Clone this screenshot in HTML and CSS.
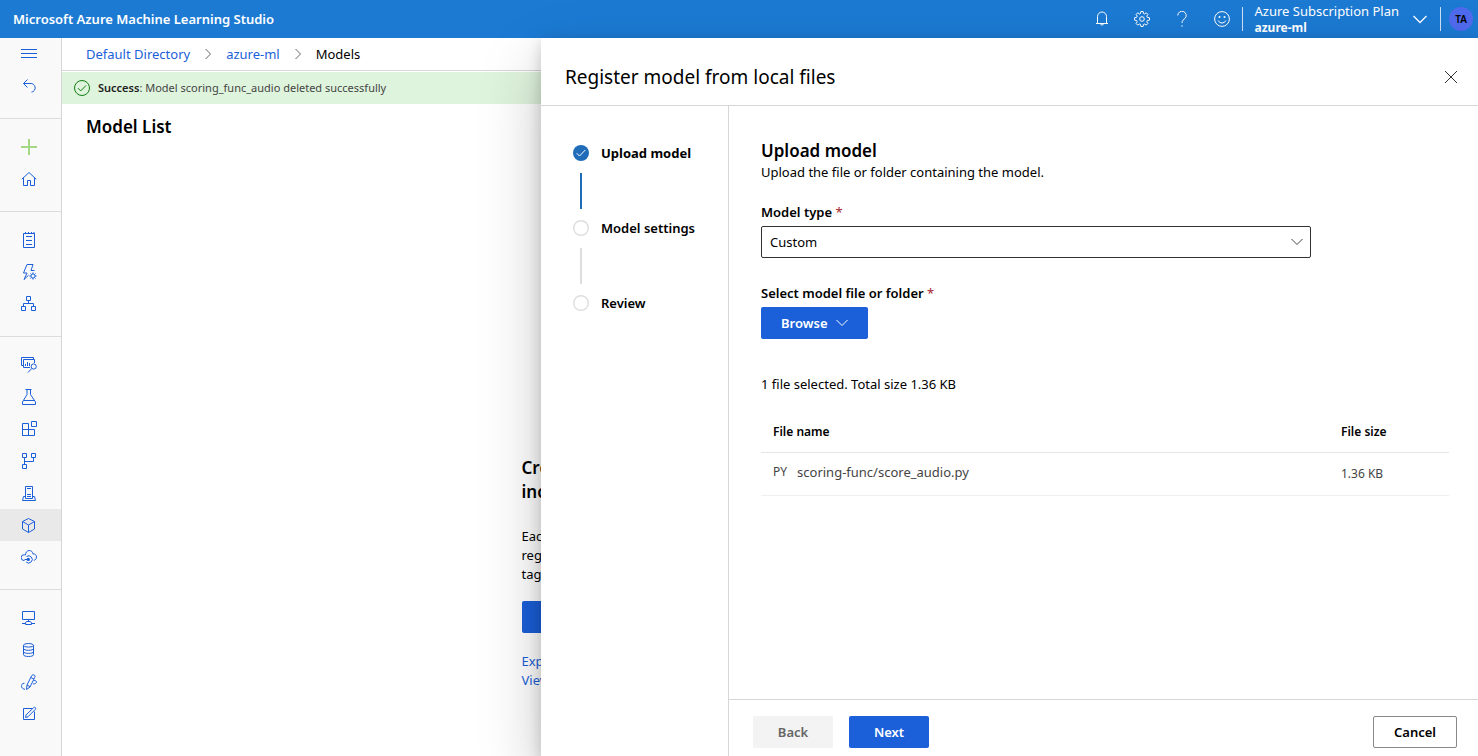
FILE: index.html
```html
<!DOCTYPE html>
<html lang="en">
<head>
<meta charset="utf-8">
<title>Microsoft Azure Machine Learning Studio</title>
<link rel="stylesheet" href="styles.css">
</head>
<body>
<div class="app">
  <header class="topbar">
    <span class="brand">Microsoft Azure Machine Learning Studio</span>
    <div class="topbar-tools">
      <button class="tool" aria-label="Notifications"><svg class="icon" viewBox="0 0 16 16"><path d="M2 12.500h12M3.500 12.500V5.500a4.500 4.500 0 0 1 9 0v7M6.500 13a1.600 1.600 0 0 0 3 0"/></svg></button>
      <button class="tool" aria-label="Settings"><svg class="icon" viewBox="0 0 16 16"><path d="M6.900.5h2.200l.4 2 1.100.5 1.700-1.200 1.600 1.600L12.800 5.100l.5 1.200 2.200.5v2.300l-2.200.5-.5 1.200 1.100 1.700-1.600 1.600-1.700-1.100-1.100.4-.4 2.100H6.900l-.4-2.100-1.100-.4-1.700 1.100-1.600-1.600 1.100-1.700-.5-1.200-2.200-.5V6.800l2.200-.5.5-1.200L2.100 3.400l1.600-1.600L5.400 3l1.100-.5z"/><circle cx="8" cy="8" r="2.300"/></svg></button>
      <button class="tool" aria-label="Help"><svg class="icon" viewBox="0 0 16 16"><path d="M3.800 4.500a4.200 4.200 0 1 1 7.400 2.700C9.600 8.800 8 9.300 8 12M8 14.200v1.500"/></svg></button>
      <button class="tool" aria-label="Feedback"><svg class="icon" viewBox="0 0 16 16"><circle cx="8" cy="8" r="7.400"/><path d="M4.200 9.500a4.100 4.100 0 0 0 7.600 0"/><circle class="dot" cx="5.500" cy="6" r="1"/><circle class="dot" cx="10.500" cy="6" r="1"/></svg></button>
      <button class="subscription">
        <span class="subscription-text"><span class="plan">Azure Subscription Plan</span><span class="workspace">azure-ml</span></span>
        <svg class="icon" viewBox="0 0 16 16"><path d="M1.500 5L8 11.500 14.500 5"/></svg>
      </button>
      <button class="account" aria-label="Account"><span class="avatar">TA</span></button>
    </div>
  </header>

  <div class="body">
    <nav class="sidebar" aria-label="Workspace">
      <div class="group">
        <a class="nav" href="#" aria-label="Menu"><svg class="icon" viewBox="0 0 16 16"><path d="M0 3.500h16M0 7.500h16M0 11.500h16"/></svg></a>
        <a class="nav" href="#" aria-label="Back"><svg class="icon" viewBox="0 0 16 16"><path d="M6.500 1.500L2.500 5.500l4 4M2.500 5.500H9a4.300 4.300 0 0 1 1.500 8.700"/></svg></a>
      </div>
      <div class="group">
        <a class="nav add" href="#" aria-label="New"><svg class="icon" viewBox="0 0 16 16"><path d="M0 8h16M8 0v16"/></svg></a>
        <a class="nav" href="#" aria-label="Home"><svg class="icon" viewBox="0 0 16 16"><path d="M.8 8.200L8 1.500l7.200 6.700M2.500 7v7.500h4v-5h3v5h4V7"/></svg></a>
      </div>
      <div class="group">
        <a class="nav" href="#" aria-label="Notebooks"><svg class="icon" viewBox="0 0 16 16"><path d="M2.500 1.500h11v14h-11zM4.500 0v2M7.500 0v2M10.500 0v2M13 0v2M5 4.500h6M5 8.500h6M5 12.500h6"/></svg></a>
        <a class="nav" href="#" aria-label="Automated ML"><svg class="icon" viewBox="0 0 16 16"><path d="M13.500 6.500H10L12 .5H6L2.500 9H6l-3 6.500 4.500-4.200"/><circle cx="12" cy="12" r="2.100"/><path d="M12 8.400v1.500M12 14.100v1.500M8.400 12h1.500M14.100 12h1.500M9.500 9.500l1 1M13.500 13.500l1 1M9.500 14.500l1-1M13.500 10.500l1-1"/></svg></a>
        <a class="nav" href="#" aria-label="Designer"><svg class="icon" viewBox="0 0 16 16"><path d="M5.500.5h4v4h-4zM.5 10.500h4v4h-4zM10.500 10.500h4v4h-4zM7.500 4.500v3M2.500 10.500v-3h10v3"/></svg></a>
      </div>
      <div class="group">
        <a class="nav" href="#" aria-label="Data"><svg class="icon" viewBox="0 0 16 16"><path d="M2.500 8.500h-2v-8h12v2M9 10.500H2.500v-8h11v3.500M4.500 9v-2M6.500 9v-4M8.500 9v-3"/><circle cx="12.700" cy="9.500" r="2.600"/><path d="M10.800 11.400L7 15.500"/></svg></a>
        <a class="nav" href="#" aria-label="Jobs"><svg class="icon" viewBox="0 0 16 16"><path d="M4.500.5h6M6 .5V5.500L1.500 13v2.500h13V13L9.500 5.500V.5M3 11.500h10"/></svg></a>
        <a class="nav" href="#" aria-label="Components"><svg class="icon" viewBox="0 0 16 16"><path d="M10.500.5h5v5h-5zM1.500 2.500h6v12h-6zM1.500 8.500h12v6h-12"/></svg></a>
        <a class="nav" href="#" aria-label="Pipelines"><svg class="icon" viewBox="0 0 16 16"><path d="M1.500.5h4v4h-4zM10.500.5h4v4h-4zM1.500 11.500h4v4h-4zM3.500 4.500v7M3.500 8.500h9v-4"/></svg></a>
        <a class="nav" href="#" aria-label="Environments"><svg class="icon" viewBox="0 0 16 16"><path d="M4.500 1.500h7v12h-7zM6 3.500h4M6 9.500h4M6 11.500h4M4.500 11.500H2.500l-1 4h13l-1-4h-2"/></svg></a>
        <a class="nav current" href="#" aria-label="Models" aria-current="page"><svg class="icon" viewBox="0 0 16 16"><path d="M7.500 1.500l6 3v7.500l-6 3.500-6-3.500V4.500zM1.500 4.500l6 3.500 6-3.500M7.500 8v7.500"/></svg></a>
        <a class="nav" href="#" aria-label="Endpoints"><svg class="icon" viewBox="0 0 16 16"><path d="M3.500 11.500H3A2.800 2.800 0 0 1 3 5.800C4 5.800 4 5.800 4.500 6 4.500 3.500 6 1.500 8.200 1.500c2.300 0 3.500 1.500 3.700 3.400 2.200-.2 3.600 1.100 3.600 3.200 0 1.600-1.100 3-2.700 3.200"/><path d="M5.500 7.500a3.600 3.600 0 1 1-.3 5.600M3.500 10.500h4"/><circle class="dot" cx="7.300" cy="10.400" r="1.700"/></svg></a>
      </div>
      <div class="group">
        <a class="nav" href="#" aria-label="Compute"><svg class="icon" viewBox="0 0 16 16"><path d="M1.500 1.500h12v8h-12zM7.500 9.500v2M1 13.500h3.500M10.500 13.500H14M4.500 12.500l1.500-1h3l1.500 1v2h-6z"/></svg></a>
        <a class="nav" href="#" aria-label="Datastores"><svg class="icon" viewBox="0 0 16 16"><ellipse cx="7.500" cy="3.300" rx="5" ry="1.800"/><path d="M2.500 3.300v9.400c0 2.400 10 2.400 10 0V3.300M2.500 6.500c0 2.400 10 2.400 10 0M2.500 9.600c0 2.400 10 2.400 10 0"/></svg></a>
        <a class="nav" href="#" aria-label="Data labeling"><svg class="icon" viewBox="0 0 16 16"><path d="M5.500 15.500l.5-4.500L10.500 2C11.500 0 15 .5 13.700 3.500L9 13zM9.800 3.500l3.200 1.700M6 11l3 1.700M4 15.300C-.8 14.800-.3 9 3.500 9.200M12.800 6.500c3.700-.3 3.700 3.500-.8 3.500"/></svg></a>
        <a class="nav" href="#" aria-label="Linked services"><svg class="icon" viewBox="0 0 16 16"><path d="M11.500 2.500h-9v11h11v-8M4.500 11.500l.6-2.600L12.700 1.600c1.200-1 2.700.5 1.700 1.700L7 10.800z"/></svg></a>
      </div>
    </nav>

    <main class="main">
      <nav class="crumbs" aria-label="Breadcrumb">
        <a href="#">Default Directory</a>
        <svg class="chevron" viewBox="0 0 8 12"><path d="M1.500 1L6.500 6l-5 5"/></svg>
        <a href="#">azure-ml</a>
        <svg class="chevron" viewBox="0 0 8 12"><path d="M1.500 1L6.500 6l-5 5"/></svg>
        <span>Models</span>
      </nav>
      <div class="banner" role="status">
        <svg class="icon" viewBox="0 0 16 16"><circle cx="8" cy="8" r="7.500"/><path d="M4 8.200l2.700 2.700L12 5.500"/></svg>
        <span><b>Success</b>: Model scoring_func_audio deleted successfully</span>
      </div>
      <h1 class="page-title">Model List</h1>
      <section class="empty">
        <h2>Create models to track and version,<br>including your own model files</h2>
        <p>Each registered model keeps its files together,<br>registered under one name and version, with<br>tags and properties.</p>
        <button class="btn primary">Register model</button>
        <div class="links"><a href="#">Explore tutorials</a><a href="#">View documentation</a></div>
      </section>
    </main>
  </div>

  <section class="panel" role="dialog" aria-labelledby="panel-title">
    <header class="panel-head">
      <h2 id="panel-title">Register model from local files</h2>
      <button class="close" aria-label="Close"><svg class="icon" viewBox="0 0 16 16"><path d="M2 2l12 12M14 2L2 14"/></svg></button>
    </header>
    <div class="panel-body">
      <ol class="steps">
        <li class="step active"><svg class="marker" viewBox="0 0 16 16"><circle cx="8" cy="8" r="8"/><path d="M3.700 8.200l2.800 2.800L12.300 5"/></svg><span>Upload model</span></li>
        <li class="step"><svg class="marker" viewBox="0 0 16 16"><circle cx="8" cy="8" r="7.300"/></svg><span>Model settings</span></li>
        <li class="step"><svg class="marker" viewBox="0 0 16 16"><circle cx="8" cy="8" r="7.300"/></svg><span>Review</span></li>
      </ol>
      <div class="pane">
        <form class="form">
          <h3>Upload model</h3>
          <p class="hint">Upload the file or folder containing the model.</p>
          <label class="label" for="type">Model type <span class="required">*</span></label>
          <div class="select-box">
            <select id="type"><option>Custom</option></select>
            <svg class="caret" viewBox="0 0 12 8"><path d="M.5 1L6 6.500 11.500 1"/></svg>
          </div>
          <label class="label file-label" for="browse">Select model file or folder <span class="required">*</span></label>
          <button class="btn primary browse" id="browse" type="button">Browse <svg class="caret" viewBox="0 0 12 8"><path d="M.5 1L6 6.500 11.500 1"/></svg></button>
          <p class="summary">1 file selected. Total size 1.36 KB</p>
          <table class="files">
            <thead><tr><th class="name-col">File name</th><th>File size</th></tr></thead>
            <tbody><tr><td class="file"><div class="file-name"><span class="kind">PY</span><span>scoring-func/score_audio.py</span></div></td><td class="size">1.36 KB</td></tr></tbody>
          </table>
        </form>
        <footer class="actions">
          <button class="btn" disabled>Back</button>
          <button class="btn primary">Next</button>
          <button class="btn outline">Cancel</button>
        </footer>
      </div>
    </div>
  </section>
</div>
</body>
</html>
```

FILE: styles.css
```css
* { box-sizing: border-box; }
body {
  margin: 0;
  font: 13px/18px "Noto Sans", "Open Sans", sans-serif;
  color: #000;
  background: #fff;
}
h1, h2, h3, p, ol { margin: 0; padding: 0; }
h1, h2, h3, b { font-weight: 600; }
button, select { font: inherit; color: inherit; }
a { color: #1b5fd9; text-decoration: none; }
svg { fill: none; stroke: currentColor; flex: none; display: block; }
.icon { width: 16px; height: 16px; }
.dot { fill: currentColor; stroke: none; }

.app {
  position: relative;
  display: flex;
  flex-direction: column;
  height: 100vh;
  overflow: hidden;
}
.topbar {
  display: flex;
  align-items: center;
  justify-content: space-between;
  height: 38px;
  flex: none;
  padding-left: 13px;
  color: #fff;
  background: #1c7ad3;
}
.brand { font-weight: 600; }
.topbar-tools { display: flex; align-items: center; }
.topbar-tools button { border: 0; padding: 0; background: none; }
.topbar-tools .tool {
  width: 40px;
  display: flex;
  justify-content: center;
}
.topbar-tools .subscription {
  display: flex;
  align-items: center;
  gap: 13px;
  height: 24px;
  padding: 0 12px;
  border-left: 1px solid #cfe0f2;
  text-align: left;
}
.subscription svg { stroke-width: 1.300; }
.subscription-text span { display: block; }
.plan { line-height: 18px; }
.workspace { font-size: 12px; line-height: 16px; font-weight: 700; }
.topbar-tools .account {
  height: 24px;
  padding: 0 5px 0 8px;
  border-left: 1px solid #cfe0f2;
}
.avatar {
  display: block;
  width: 24px;
  border-radius: 50%;
  background: #4f6bed;
  color: #000;
  font-size: 10px;
  line-height: 24px;
  font-weight: 600;
  text-align: center;
}

.body { display: flex; flex: 1; min-height: 0; }
.sidebar {
  width: 62px;
  flex: none;
  border-right: 1px solid #d6d6d6;
  background: #f9f9f9;
}
.group { padding: 12px 0 16px; border-bottom: 1px solid #dcdcdc; }
.group:first-child { padding-top: 0; }
.group:last-child { border-bottom: 0; }
.nav { display: block; padding: 8px 21px; }
.nav.current { background: #e9e9e9; }
.add { color: #a6d785; }
.add svg { stroke-width: 2; }

.main { flex: 1; min-width: 0; }
.crumbs {
  display: flex;
  align-items: center;
  gap: 14px;
  height: 33px;
  padding-left: 24px;
  border-bottom: 1px solid #d6d6d6;
}
.chevron { width: 8px; height: 12px; color: #666; }
.banner {
  display: flex;
  align-items: center;
  gap: 8px;
  height: 32px;
  margin-top: 1px;
  padding-left: 12px;
  background: #dff4dd;
  color: #444;
  font-size: 11px;
}
.banner b { color: #222; }
.banner .icon { color: #107c10; }
.page-title { padding: 11px 24px; font-size: 17px; line-height: 24px; }
.empty { width: 497px; margin: 306px auto 0; }
.empty h2 { font-size: 17px; line-height: 24px; }
.empty p { margin: 23px 0 17px; line-height: 19px; }
.links { margin-top: 19px; line-height: 19px; }
.links a { display: block; }

.btn {
  height: 32px;
  min-width: 80px;
  padding: 0 20px;
  border: 0;
  border-radius: 2px;
  font-weight: 600;
}
.btn:disabled { background: #f3f3f3; color: #666; }
.btn.primary { background: #1b5fd9; color: #fff; }
.btn.outline { border: 1px solid #8a8886; background: #fff; }

.panel {
  position: absolute;
  inset: 38px 0 0 auto;
  width: min(937px, 100%);
  display: flex;
  flex-direction: column;
  background: #fff;
  box-shadow: 0 26px 58px rgba(0, 0, 0, .22), 0 5px 14px rgba(0, 0, 0, .18);
}
.panel-head {
  display: flex;
  align-items: center;
  justify-content: space-between;
  padding: 26px 19px 15px 24px;
  border-bottom: 1px solid #d6d6d6;
}
.panel-head h2 { font-size: 19px; line-height: 26px; font-weight: 400; }
.close { padding: 0; border: 0; background: none; color: #333; }
.panel-body { display: flex; flex: 1; min-height: 0; }
.steps {
  width: 188px;
  flex: none;
  padding: 38px 0 0 32px;
  border-right: 1px solid #d6d6d6;
  list-style: none;
  font-weight: 600;
}
.step { display: grid; grid-template-columns: 16px 1fr; column-gap: 12px; line-height: 18px; }
.step:not(:last-child)::after {
  content: "";
  justify-self: center;
  width: 2px;
  height: 36px;
  margin: 11px 0 10px;
  background: #dedede;
}
.marker { width: 16px; height: 16px; align-self: center; stroke: #dedede; stroke-width: 1.400; }
.active { font-weight: 700; }
.active .marker { stroke: #fff; stroke-width: 1; }
.active circle { fill: #1f6cb9; stroke: none; }
.step.active::after { background: #1f6cb9; }

.pane { flex: 1; min-width: 0; display: flex; flex-direction: column; }
.form { flex: 1; min-height: 0; padding: 33px 29px 0 32px; }
.form h3 { font-size: 17px; line-height: 24px; }
.label { display: block; margin: 22px 0 5px; font-weight: 600; }
.required { color: #a4262c; font-weight: 400; }
.select-box { display: grid; width: 80%; align-items: center; }
.select-box > * { grid-area: 1 / 1; }
.select-box select {
  appearance: none;
  width: 100%;
  height: 32px;
  padding: 0 8px;
  border: 1px solid #323130;
  border-radius: 2px;
  background: #fff;
}
.caret { width: 12px; height: 8px; }
.select-box .caret { justify-self: end; margin-right: 8px; pointer-events: none; color: #444; }
.file-label { margin-top: 26px; }
.browse { display: flex; align-items: center; gap: 8px; }
.summary { margin: 36px 0 17px; }
.files { width: 100%; border-collapse: collapse; table-layout: fixed; }
.files th, .files td { padding: 12px; text-align: left; }
.files th { padding: 13px 12px 11px; font-size: 12px; font-weight: 600; border-bottom: 1px solid #e5e5e5; }
.files td { color: #444; border-bottom: 1px solid #f0f0f0; }
.files .file { padding: 10px 12px 14px; }
.file-name { display: flex; gap: 10px; }
.name-col { width: 568px; }
.kind, .size { font-size: 12px; }
.actions {
  display: flex;
  gap: 16px;
  padding: 16px 21px 8px 24px;
  border-top: 1px solid #d6d6d6;
}
.outline { margin-left: auto; }
```
